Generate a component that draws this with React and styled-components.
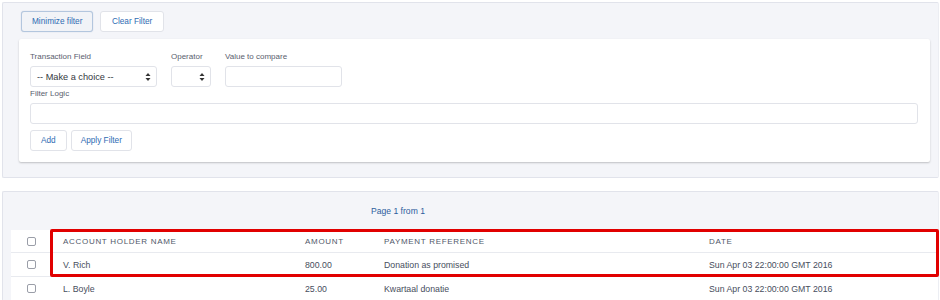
import React from "react";
import styled, { createGlobalStyle } from "styled-components";

const Global = createGlobalStyle`
  html, body { margin: 0; padding: 0; background: #ffffff; }
  body { font-family: "Liberation Sans", Arial, Helvetica, sans-serif; }
  * { box-sizing: border-box; }
`;

const Page = styled.div`
  width: 940px;
  height: 300px;
  overflow: hidden;
  padding: 2px 1px 0 2px;
  display: flex;
  flex-direction: column;
  gap: 13px;
`;

const Panel = styled.section`
  background: #f4f5f9;
  border: 1px solid #e1e3eb;
  border-right-color: #eceef3;
  border-radius: 2px;
  display: flex;
  flex-direction: column;
`;

const FilterPanel = styled(Panel)`
  height: 176px;
  flex: none;
  padding: 8px 8px 0 16px;
  gap: 7px;
`;

const Toolbar = styled.div`
  display: flex;
  gap: 7px;
  padding-left: 2px;
`;

const Button = styled.button`
  height: 21px;
  padding: 0 ${(p) => p.$px || 11}px;
  font-family: inherit;
  font-size: 8.25px;
  color: #2f6cb3;
  background: ${(p) => (p.$active ? "#f1f3f7" : "#ffffff")};
  border: 1px solid ${(p) => (p.$active ? "#b3c6de" : "#e1e3e9")};
  border-radius: 3px;
  box-shadow: ${(p) => (p.$active ? "0 0 1px rgba(120,150,190,0.5)" : "none")};
  cursor: pointer;
`;

const Card = styled.div`
  background: #ffffff;
  border-radius: 2px;
  box-shadow: 0 1px 2px rgba(0, 0, 0, 0.22);
  padding: 13px 12px 0 11px;
  height: 123px;
  display: flex;
  flex-direction: column;
`;

const FieldRow = styled.div`
  display: flex;
  gap: 14px;
`;

const Field = styled.div`
  display: flex;
  flex-direction: column;
  gap: 4px;
`;

const Label = styled.label`
  font-size: 8px;
  line-height: 10px;
  color: #59606e;
  white-space: nowrap;
`;

const SelectBox = styled.div`
  width: ${(p) => p.$w}px;
  height: 21px;
  border: 1px solid #e1e3e9;
  border-radius: 3px;
  background: #ffffff;
  display: flex;
  align-items: center;
  justify-content: space-between;
  padding: 0 5px 0 6px;
  font-size: 9.2px;
  color: #333740;
`;

const Arrows = styled.svg`
  flex: none;
`;

const TextBox = styled.div`
  width: ${(p) => (p.$w ? `${p.$w}px` : "100%")};
  height: 21px;
  border: 1px solid #e1e3e9;
  border-radius: 3px;
  background: #ffffff;
`;

const LogicField = styled(Field)`
  margin-top: 2px;
  gap: 4px;
`;

const Actions = styled.div`
  display: flex;
  gap: 4px;
  margin-top: 6px;
`;

const ListPanel = styled(Panel)`
  flex: 1;
  padding: 0 0 0 8px;
  border-bottom: none;
`;

const Pager = styled.div`
  height: 38px;
  padding-left: 360px;
  display: flex;
  align-items: center;
  font-size: 8.6px;
  color: #2d5e9d;
`;

const TableWrap = styled.div`
  position: relative;
  background: #ffffff;
`;

const Row = styled.div`
  display: grid;
  grid-template-columns: 52px 242px 79px 325px 1fr;
  align-items: center;
  height: ${(p) => (p.$head ? 23 : 24)}px;
  border-bottom: 1px solid #e8eaef;
  font-size: ${(p) => (p.$head ? "8px" : "8.75px")};
  letter-spacing: ${(p) => (p.$head ? "0.7px" : "0")};
  text-transform: ${(p) => (p.$head ? "uppercase" : "none")};
  color: ${(p) => (p.$head ? "#505869" : "#474e5d")};
  white-space: nowrap;
`;

const CheckCell = styled.div`
  padding-left: 16px;
  display: flex;
  align-items: center;
`;

const Check = styled.span`
  width: 9px;
  height: 9px;
  border: 1px solid #9a9ea8;
  border-radius: 2px;
  background: #fff;
`;

const Highlight = styled.div`
  position: absolute;
  left: 39px;
  top: -1px;
  width: 889px;
  height: 48px;
  border: 3px solid #e10000;
  border-radius: 2px;
  pointer-events: none;
`;

const UpDown = () => (
  <Arrows width="6" height="10" viewBox="0 0 6 10">
    <path d="M3 1 L5.5 4 L0.5 4 Z" fill="#333" />
    <path d="M3 9 L5.5 6 L0.5 6 Z" fill="#333" />
  </Arrows>
);

const rows = [
  { name: "V. Rich", amount: "800.00", ref: "Donation as promised", date: "Sun Apr 03 22:00:00 GMT 2016" },
  { name: "L. Boyle", amount: "25.00", ref: "Kwartaal donatie", date: "Sun Apr 03 22:00:00 GMT 2016" },
];

export default function App() {
  return (
    <>
      <Global />
      <Page>
        <FilterPanel>
          <Toolbar>
            <Button $active $px={10}>Minimize filter</Button>
            <Button $px={10.5}>Clear Filter</Button>
          </Toolbar>
          <Card>
            <FieldRow>
              <Field>
                <Label>Transaction Field</Label>
                <SelectBox $w={127}>
                  <span>-- Make a choice --</span>
                  <UpDown />
                </SelectBox>
              </Field>
              <Field>
                <Label>Operator</Label>
                <SelectBox $w={40}>
                  <span />
                  <UpDown />
                </SelectBox>
              </Field>
              <Field>
                <Label>Value to compare</Label>
                <TextBox $w={117} />
              </Field>
            </FieldRow>
            <LogicField>
              <Label>Filter Logic</Label>
              <TextBox />
            </LogicField>
            <Actions>
              <Button $px={10}>Add</Button>
              <Button $px={9}>Apply Filter</Button>
            </Actions>
          </Card>
        </FilterPanel>
        <ListPanel>
          <Pager>Page 1 from 1</Pager>
          <TableWrap>
            <Row $head>
              <CheckCell><Check /></CheckCell>
              <span>Account Holder Name</span>
              <span>Amount</span>
              <span>Payment Reference</span>
              <span>Date</span>
            </Row>
            {rows.map((r) => (
              <Row key={r.name}>
                <CheckCell><Check /></CheckCell>
                <span>{r.name}</span>
                <span>{r.amount}</span>
                <span>{r.ref}</span>
                <span>{r.date}</span>
              </Row>
            ))}
            <Highlight />
          </TableWrap>
        </ListPanel>
      </Page>
    </>
  );
}
